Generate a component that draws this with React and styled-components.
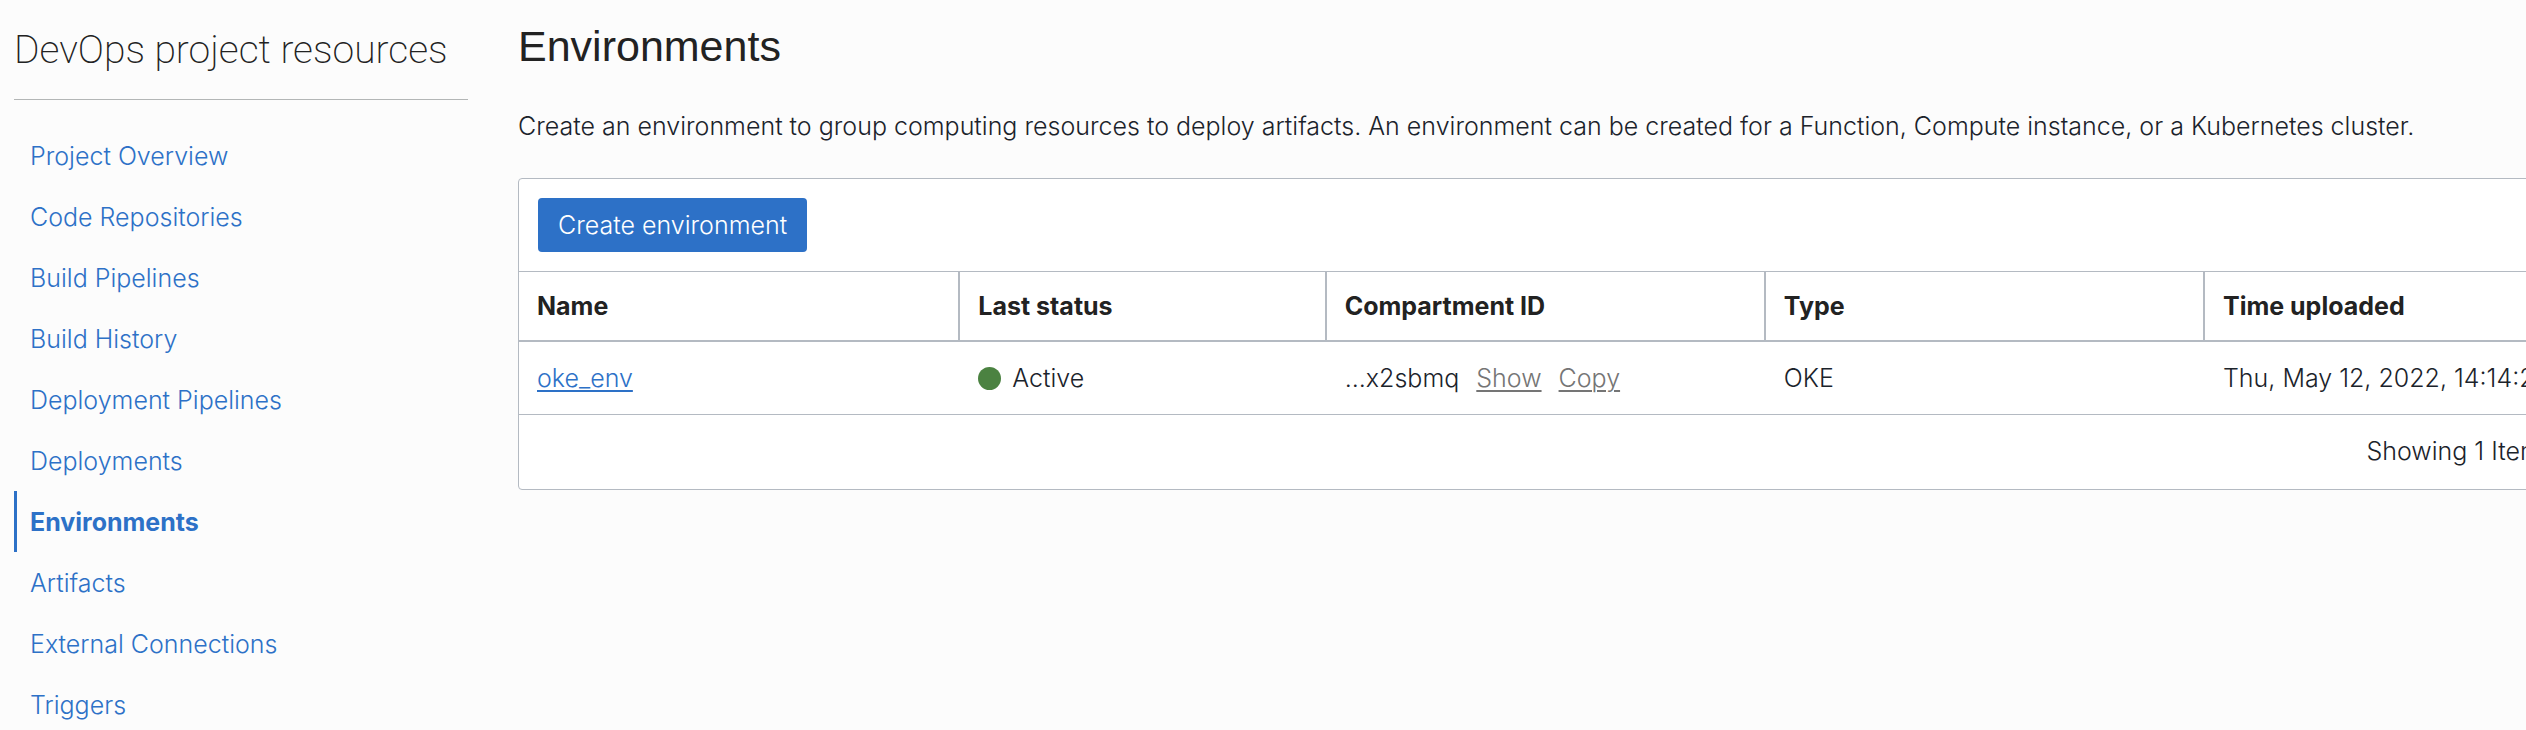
import React from "react";
import styled, { createGlobalStyle } from "styled-components";

const GlobalStyle = createGlobalStyle`
  *, *::before, *::after { box-sizing: border-box; }
  body {
    margin: 0;
    background: #fcfcfc;
    color: #1b232b;
    font-family: Inter, "Noto Sans", sans-serif;
    font-size: 25px;
    font-weight: 300;
    line-height: 32px;
  }
`;

const Page = styled.div`
  display: flex;
  align-items: flex-start;
  gap: 50px;
  padding-left: 14px;
  overflow: hidden;
`;

const Sidebar = styled.aside`
  flex: 0 0 454px;
`;

const SidebarTitle = styled.h2`
  margin: 0;
  padding: 26px 0 25px;
  border-bottom: 1px solid #b3b6b6;
  color: #222;
  font-family: Roboto, sans-serif;
  font-size: 39px;
  font-weight: 200;
  line-height: 48px;
  white-space: nowrap;
`;

const NavList = styled.ul`
  margin: 0;
  padding: 25px 0 0;
  list-style: none;
`;

const NavLink = styled.a`
  display: flex;
  align-items: center;
  height: 61px;
  padding-left: 13px;
  border-left: 3px solid ${(p) => (p.$active ? "#2d71c7" : "transparent")};
  color: #2d71c7;
  font-weight: ${(p) => (p.$active ? 700 : "inherit")};
  text-decoration: none;
`;

const Main = styled.main`
  flex: 1;
  min-width: 0;
`;

const Heading = styled.h1`
  margin: 0;
  padding-top: 20px;
  color: #222;
  font-family: "Liberation Sans", Arial, sans-serif;
  font-size: 43px;
  font-weight: 400;
  line-height: 52px;
`;

const Description = styled.p`
  margin: 0;
  padding: 38px 0 36px;
  white-space: nowrap;
`;

const Panel = styled.section`
  width: 110%;
  background: #fff;
  border: 1px solid #b4bac2;
  border-radius: 4px;
`;

const Toolbar = styled.div`
  padding: 19px;
  border-bottom: 1px solid #b4bac2;
`;

const PrimaryButton = styled.button`
  display: block;
  height: 54px;
  padding: 0 20px;
  border: 0;
  border-radius: 4px;
  background: #2d71c7;
  color: #fff;
  font: inherit;
`;

const Table = styled.table`
  width: 100%;
  table-layout: fixed;
  border-collapse: separate;
  border-spacing: 0;
`;

const Column = styled.col`
  width: ${(p) => p.$width};
`;

const HeaderCell = styled.th`
  height: 70px;
  padding: 0 18px;
  border-right: 2px solid #b4bac2;
  border-bottom: 2px solid #b4bac2;
  color: #222;
  font-weight: 700;
  text-align: left;

  &:last-child { border-right: 0; }
`;

const Cell = styled.td`
  height: 73px;
  padding: 0 18px;
  border-bottom: 1px solid #b4bac2;
  white-space: nowrap;
`;

const NameLink = styled.a`
  color: #2d71c7;
  text-decoration: underline 2px;
  text-underline-offset: 3px;
`;

const Inline = styled.span`
  display: flex;
  align-items: center;
  gap: ${(p) => p.$gap};
`;

const StatusDot = styled.span`
  width: 23px;
  height: 23px;
  border-radius: 50%;
  background: #4b8241;
`;

const TextButton = styled.button`
  padding: 0;
  border: 0;
  background: none;
  color: #757575;
  font: inherit;
  text-decoration: underline 2px;
  text-underline-offset: 3px;
`;

const Footer = styled.div`
  display: flex;
  align-items: center;
  justify-content: flex-end;
  height: 74px;
  padding: 0 184px 2px 0;
`;

const resources = [
  "Project Overview",
  "Code Repositories",
  "Build Pipelines",
  "Build History",
  "Deployment Pipelines",
  "Deployments",
  "Environments",
  "Artifacts",
  "External Connections",
  "Triggers",
];

const columns = [
  { label: "Name", width: "20%" },
  { label: "Last status", width: "16.6%" },
  { label: "Compartment ID", width: "19.9%" },
  { label: "Type", width: "19.9%" },
  { label: "Time uploaded", width: "auto" },
];

export default function App() {
  return (
    <>
      <GlobalStyle />
      <Page>
        <Sidebar>
          <SidebarTitle>DevOps project resources</SidebarTitle>
          <nav aria-label="DevOps project resources">
            <NavList>
              {resources.map((name) => (
                <li key={name}>
                  <NavLink href="#" $active={name === "Environments"}>
                    {name}
                  </NavLink>
                </li>
              ))}
            </NavList>
          </nav>
        </Sidebar>
        <Main>
          <Heading>Environments</Heading>
          <Description>
            Create an environment to group computing resources to deploy
            artifacts. An environment can be created for a Function, Compute
            instance, or a Kubernetes cluster.
          </Description>
          <Panel>
            <Toolbar>
              <PrimaryButton type="button">Create environment</PrimaryButton>
            </Toolbar>
            <Table>
              <colgroup>
                {columns.map((c) => (
                  <Column key={c.label} $width={c.width} />
                ))}
              </colgroup>
              <thead>
                <tr>
                  {columns.map((c) => (
                    <HeaderCell key={c.label} scope="col">
                      {c.label}
                    </HeaderCell>
                  ))}
                </tr>
              </thead>
              <tbody>
                <tr>
                  <Cell>
                    <NameLink href="#">oke_env</NameLink>
                  </Cell>
                  <Cell>
                    <Inline $gap="11px">
                      <StatusDot />
                      Active
                    </Inline>
                  </Cell>
                  <Cell>
                    <Inline $gap="17px">
                      ...x2sbmq
                      <TextButton type="button">Show</TextButton>
                      <TextButton type="button">Copy</TextButton>
                    </Inline>
                  </Cell>
                  <Cell>OKE</Cell>
                  <Cell>Thu, May 12, 2022, 14:14:2</Cell>
                </tr>
              </tbody>
            </Table>
            <Footer>Showing 1 Item</Footer>
          </Panel>
        </Main>
      </Page>
    </>
  );
}
